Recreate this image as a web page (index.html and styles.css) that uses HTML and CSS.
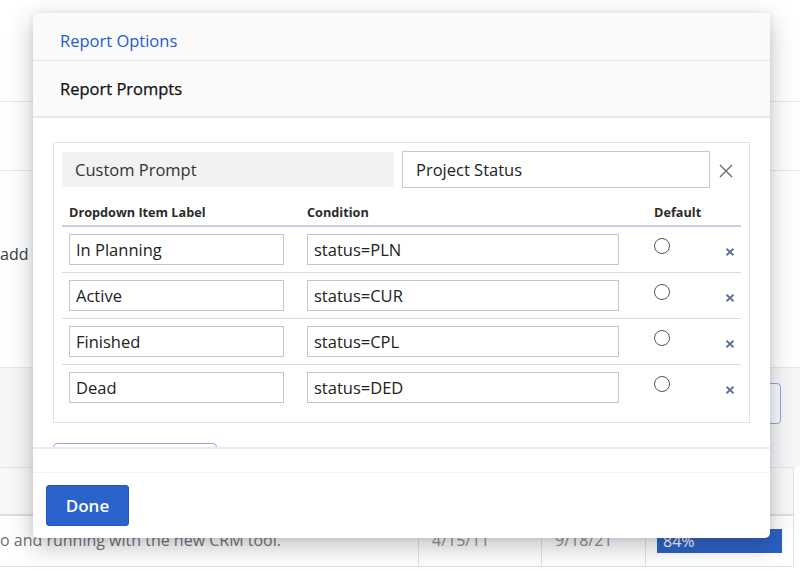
FILE: index.html
```html
<!DOCTYPE html>
<html>
<head>
<meta charset="utf-8">
<link rel="stylesheet" href="styles.css">
</head>
<body>
<div class="page">
  <div class="bg-top"></div>
  <div class="bg-bar"></div>
  <div class="bg-content"><span class="bg-text">add</span></div>
  <div class="bg-toolbar"><div class="bg-btn"></div></div>
  <div class="bg-table">
    <div class="bg-thead"></div>
    <div class="bg-row">
      <div class="bg-cell bg-desc">o and running with the new CRM tool.</div>
      <div class="bg-cell">4/15/11</div>
      <div class="bg-cell">9/18/21</div>
      <div class="bg-cell bg-pct"><div class="bg-bar84">84%</div></div>
    </div>
  </div>
</div>

<div class="modal">
  <div class="m-tab">Report Options</div>
  <div class="m-sub">Report Prompts</div>
  <div class="m-body">
    <div class="prompt-box">
      <div class="cp-row">
        <div class="cp-label">Custom Prompt</div>
        <div class="cp-input">Project Status</div>
        <div class="cp-close">
          <svg width="14" height="14" viewBox="0 0 14 14"><path d="M1 1L13 13M13 1L1 13" stroke="#6b6b6b" stroke-width="1.4" fill="none"/></svg>
        </div>
      </div>
      <div class="grid head">
        <div class="th">Dropdown Item Label</div>
        <div class="th">Condition</div>
        <div class="th">Default</div>
        <div class="th"></div>
      </div>
      <div class="grid row">
        <div class="cell"><div class="inp">In Planning</div></div>
        <div class="cell"><div class="inp">status=PLN</div></div>
        <div class="cell"><span class="radio"></span></div>
        <div class="cell del"><svg width="10" height="8" viewBox="0 0 10 8"><path d="M1.5 0.8L8.5 7.2M8.5 0.8L1.5 7.2" stroke="#5f7595" stroke-width="2" fill="none"/></svg></div>
      </div>
      <div class="grid row">
        <div class="cell"><div class="inp">Active</div></div>
        <div class="cell"><div class="inp">status=CUR</div></div>
        <div class="cell"><span class="radio"></span></div>
        <div class="cell del"><svg width="10" height="8" viewBox="0 0 10 8"><path d="M1.5 0.8L8.5 7.2M8.5 0.8L1.5 7.2" stroke="#5f7595" stroke-width="2" fill="none"/></svg></div>
      </div>
      <div class="grid row">
        <div class="cell"><div class="inp">Finished</div></div>
        <div class="cell"><div class="inp">status=CPL</div></div>
        <div class="cell"><span class="radio"></span></div>
        <div class="cell del"><svg width="10" height="8" viewBox="0 0 10 8"><path d="M1.5 0.8L8.5 7.2M8.5 0.8L1.5 7.2" stroke="#5f7595" stroke-width="2" fill="none"/></svg></div>
      </div>
      <div class="grid row last">
        <div class="cell"><div class="inp">Dead</div></div>
        <div class="cell"><div class="inp">status=DED</div></div>
        <div class="cell"><span class="radio"></span></div>
        <div class="cell del"><svg width="10" height="8" viewBox="0 0 10 8"><path d="M1.5 0.8L8.5 7.2M8.5 0.8L1.5 7.2" stroke="#5f7595" stroke-width="2" fill="none"/></svg></div>
      </div>
    </div>
    <div class="add-btn"></div>
  </div>
  <div class="m-foot">
    <div class="m-foot-gap"></div>
    <div class="m-foot-main"><button class="done">Done</button></div>
  </div>
</div>
</body>
</html>
```
FILE: styles.css
```css
* { box-sizing: border-box; }
html, body { margin: 0; padding: 0; }
body {
  width: 800px;
  height: 571px;
  overflow: hidden;
  background: #ffffff;
  font-family: "Open Sans", "Liberation Sans", sans-serif;
  color: #333333;
  position: relative;
}

/* background page */
.page { width: 800px; }
.bg-top { height: 102px; border-bottom: 1px solid #e6e6e6; }
.bg-bar { height: 69px; border-bottom: 1px solid #e6e6e6; }
.bg-content { height: 196px; padding-top: 72px; }
.bg-text { font-size: 16px; color: #3a3a3a; line-height: 22px; }
.bg-toolbar {
  height: 100px;
  background: #f7f7f8;
  border-top: 1px solid #e8e8e8;
  display: flex;
  justify-content: flex-end;
  padding-top: 15px;
  padding-right: 19px;
}
.bg-btn {
  width: 120px;
  height: 41px;
  border: 1px solid #8ea2dd;
  border-radius: 4px;
  background: #fbfbfd;
}
.bg-table { width: 794px; border-right: 1px solid #e2e2e2; }
.bg-thead {
  height: 49px;
  background: #f8f8f8;
  border-top: 1px solid #e6e6e6;
  border-bottom: 2px solid #dedede;
}
.bg-row {
  display: grid;
  grid-template-columns: 418px 123px 104px 148px;
  height: 51px;
  border-bottom: 1px solid #e2e2e2;
}
.bg-cell {
  border-left: 1px solid #e2e2e2;
  padding: 12px 0 0 13px;
  font-size: 16px;
  color: #8a8a8a;
  line-height: 24px;
}
.bg-desc { border-left: none; padding-left: 0; color: #707070; }
.bg-pct { padding: 13px 11px 0 11px; }
.bg-bar84 {
  height: 24px;
  background: #2a5fc4;
  color: #ffffff;
  padding-left: 6px;
  font-size: 16px;
  line-height: 24px;
}

/* modal */
.modal {
  position: absolute;
  left: 33px;
  top: 13px;
  width: 737px;
  height: 525px;
  background: #ffffff;
  border-radius: 0 0 5px 5px;
  box-shadow: 0 8px 24px rgba(40, 45, 60, 0.3), 0 0 6px rgba(40, 45, 60, 0.08);
  overflow: hidden;
  display: flex;
  flex-direction: column;
}
.m-tab {
  height: 48px;
  background: #fafafa;
  border-bottom: 1px solid #e3e3e3;
  padding-left: 27px;
  font-size: 16.5px;
  line-height: 56px;
  color: #1f5bd0;
}
.m-sub {
  height: 57px;
  background: #fafafa;
  border-bottom: 2px solid #e8e8e8;
  padding-left: 27px;
  font-size: 16.5px;
  line-height: 56px;
  color: #111111;
  font-weight: 500;
  -webkit-text-stroke: 0.25px #111111;
}
.m-body {
  height: 331px;
  overflow: hidden;
  padding: 24px 20px 0 20px;
  border-bottom: 2px solid #ebebeb;
}
.prompt-box {
  border: 1px solid #e3e3e3;
  height: 281px;
  padding: 8px 8px 0 8px;
}
.cp-row { display: flex; align-items: center; height: 37px; }
.cp-label {
  width: 332px;
  height: 35px;
  background: #f2f2f2;
  border-radius: 2px;
  padding-left: 13px;
  font-size: 16.5px;
  line-height: 35px;
  color: #333;
}
.cp-input {
  margin-left: 8px;
  width: 308px;
  height: 37px;
  border: 1px solid #c9c9c9;
  padding-left: 13px;
  font-size: 16.5px;
  line-height: 35px;
  color: #222;
}
.cp-close { margin-left: 8px; width: 16px; height: 16px; display: flex; align-items: center; justify-content: center; padding-top: 2px; }

.grid {
  display: grid;
  grid-template-columns: 238px 347px 63px 31px;
  width: 679px;
}
.head { height: 39px; border-bottom: 2px solid #c7d0de; }
.th {
  font-size: 12.7px;
  font-weight: 700;
  color: #2b2b2b;
  padding: 15px 0 0 7px;
  line-height: 18px;
  white-space: nowrap;
}
.row { height: 46px; border-bottom: 1px solid #d6dce7; }
.row.last { border-bottom: none; }
.cell { padding: 7px 0 0 7px; position: relative; }
.inp {
  height: 31px;
  border: 1px solid #c6c6c6;
  padding-left: 6px;
  font-size: 16.5px;
  line-height: 29px;
  color: #222;
}
.cell:first-child .inp { width: 215px; }
.cell:nth-child(2) .inp { width: 312px; }
.radio {
  display: block;
  margin-top: 4px;
  width: 16px;
  height: 16px;
  border: 1px solid #555;
  border-radius: 50%;
  background: #fff;
}
.del { padding: 21px 0 0 15px; line-height: 0; }

.add-btn {
  margin-top: 20px;
  width: 164px;
  height: 30px;
  border: 1px solid #96a8dc;
  border-radius: 4px;
}

.m-foot { flex: 1; display: flex; flex-direction: column; }
.m-foot-gap { height: 24px; border-bottom: 1px solid #f3f3f3; }
.m-foot-main { padding: 12px 0 0 13px; }
.done {
  width: 83px;
  height: 41px;
  background: #2a63cb;
  border: 1px solid #1f56c0;
  border-radius: 3px;
  color: #ffffff;
  font-family: "Open Sans", "Liberation Sans", sans-serif;
  font-size: 17px;
  font-weight: 600;
  padding: 0;
}
```
